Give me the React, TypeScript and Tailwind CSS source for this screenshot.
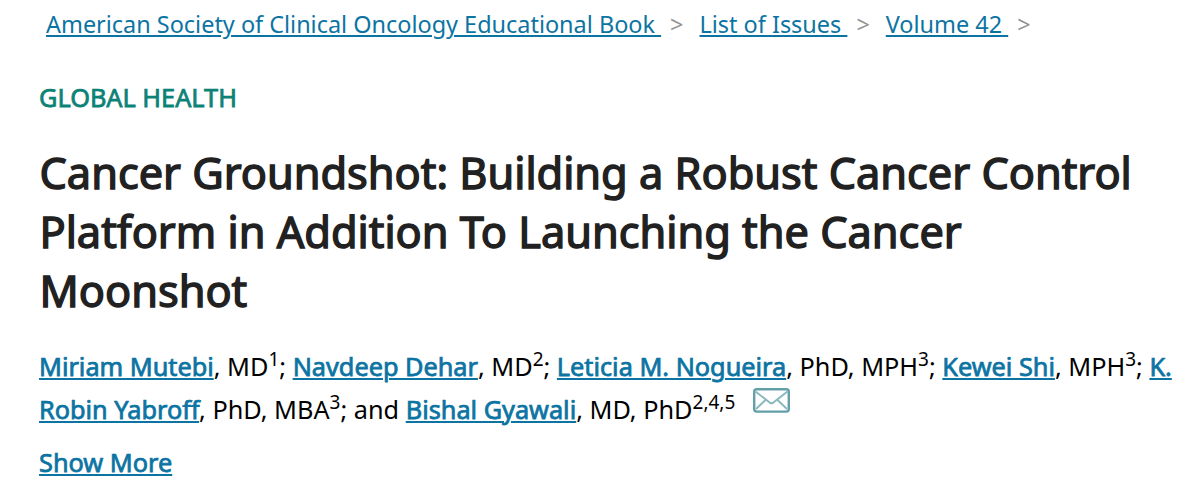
import type { ReactNode } from "react";

const crumbs = ["American Society of Clinical Oncology Educational Book", "List of Issues", "Volume 42"];

const Author = ({ children }: { children: ReactNode }) => (
  <a
    href="#"
    className="text-[#0c74a3] underline decoration-2 underline-offset-[2px] [-webkit-text-stroke:0.75px_#0c74a3]"
  >
    {children}
  </a>
);

const Sup = ({ children }: { children: ReactNode }) => (
  <sup className="-top-[10px] text-[19px] leading-none">{children}</sup>
);

const MailIcon = () => (
  <svg viewBox="0 0 37 25" className="ml-[18px] h-[25px] w-[37px]" fill="none">
    <rect x="1.2" y="1.2" width="34.6" height="22.4" rx="2.5" stroke="#639fa9" strokeWidth="2.4" />
    <path d="M2.5 3.5 16 14Q18.5 16.5 21 14L34.5 3.5M3 21 12.5 12M34 21 24.5 12" stroke="#8ab8bd" strokeWidth="1.9" />
  </svg>
);

const App = () => {
  return (
    <main className="h-[502px] w-[1200px] overflow-hidden bg-white pl-[39px] font-['Noto_Sans',sans-serif] text-black">
      <nav className="flex h-[50px] items-center pl-[7px] text-[23.45px] whitespace-pre">
        {crumbs.map((crumb) => (
          <span key={crumb} className="flex items-center">
            <a href="#" className="text-[#0c74a3] underline decoration-2 underline-offset-[2px]">
              {crumb + " "}
            </a>
            <span className="mr-4 ml-[9px] text-[#939393]">&gt;</span>
          </span>
        ))}
      </nav>

      <p className="mt-[29px] text-[25.3px] leading-9 text-[#0b8276] [-webkit-text-stroke:0.75px_#0b8276]">
        GLOBAL HEALTH
      </p>

      <h1 className="mt-7 pl-[0.5px] text-[43.3px] leading-[59px] whitespace-nowrap text-[#212121] [-webkit-text-stroke:1.4px_#212121]">
        <span className="block">Cancer Groundshot: Building a Robust Cancer Control</span>
        <span className="block">Platform in Addition To Launching the Cancer</span>
        <span className="block">Moonshot</span>
      </h1>

      <div className="mt-[25px] text-[25.28px] leading-[43px] whitespace-nowrap">
        <div className="h-[43px]">
          <Author>Miriam Mutebi</Author>, MD<Sup>1</Sup>; <Author>Navdeep Dehar</Author>
          <span className="inline-block">,</span> MD<Sup>2</Sup>; <Author>Leticia M. Nogueira</Author>, PhD, MPH
          <Sup>3</Sup>; <Author>Kewei Shi</Author>, MPH<Sup>3</Sup>; <Author>K.</Author>
        </div>
        <div className="flex h-[43px]">
          <span>
            <Author>Robin Yabroff</Author>, PhD, MBA<Sup>3</Sup>; and <Author>Bishal Gyawali</Author>, MD, PhD
            <Sup>2,4,5</Sup>
          </span>
          <MailIcon />
        </div>
      </div>

      <div className="mt-[13px] text-[25.3px] leading-9">
        <Author>Show More</Author>
      </div>
    </main>
  );
};

export default App;
